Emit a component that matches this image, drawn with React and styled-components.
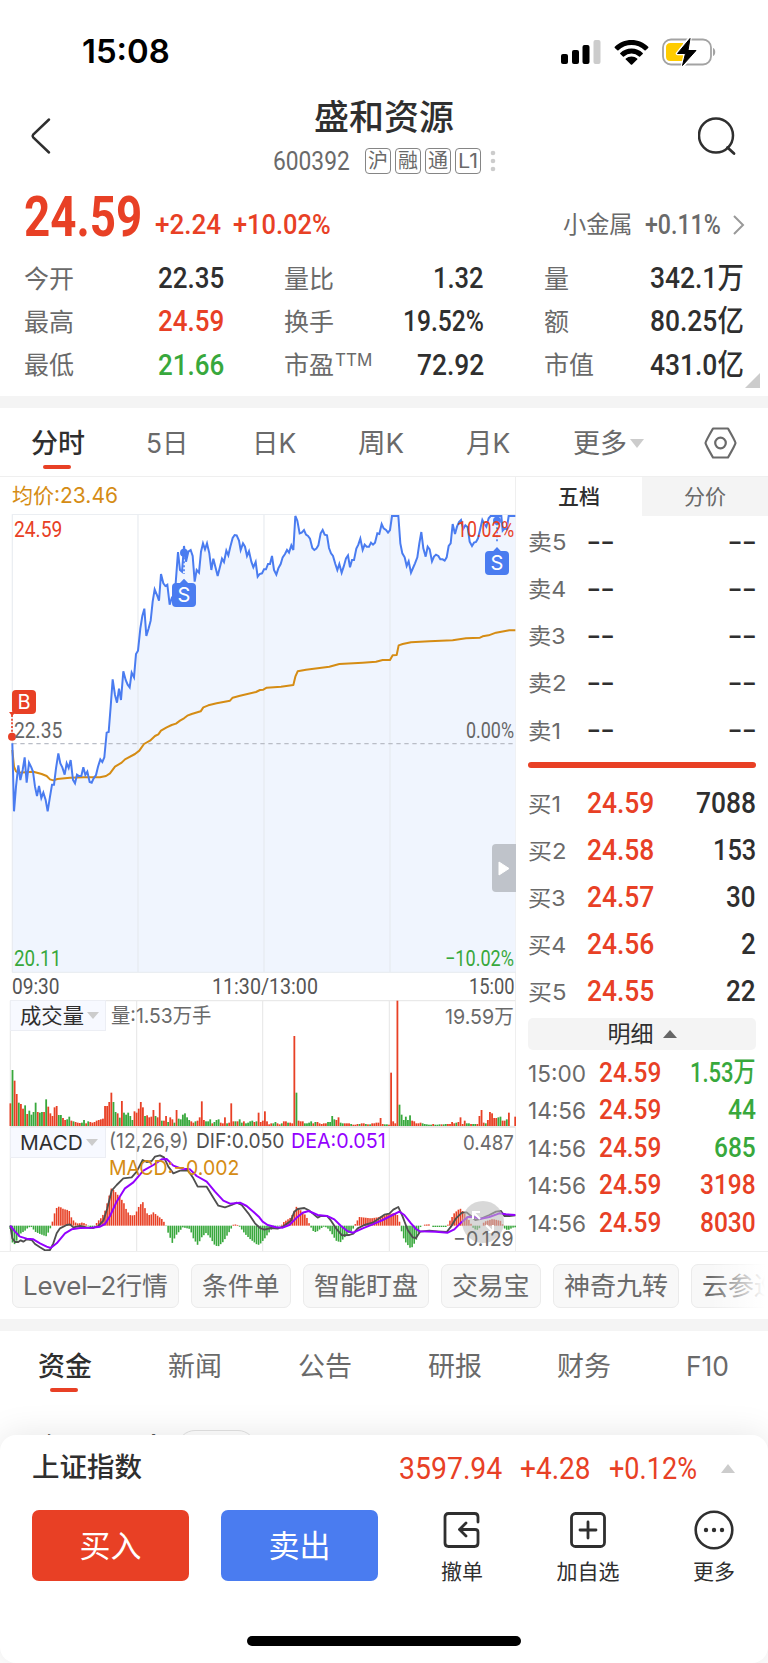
import React, { useLayoutEffect, useRef } from 'react';
import styled, { createGlobalStyle } from 'styled-components';

const RED = '#e84025';
const GREEN = '#38a83c';
const BLUE = '#4a7cf0';
const GOLD = '#d58c14';
const INK = '#2f2f2f';
const GREY = '#6a6a6a';

const DIN = `Roboto, "Noto Sans CJK SC", sans-serif`;
const SANS = `Inter, "Noto Sans CJK SC", sans-serif`;

const Global = createGlobalStyle`
  * { box-sizing: border-box; }
  body { margin: 0; background: #fff; color: ${INK}; font-family: ${SANS}; overflow: hidden; }
  svg { display: block; flex: none; }
`;

/* ---------- condensed text ---------- */

const FitBox = styled.span`
  display: block;
  flex: none;
  height: ${(p) => Math.round(p.$size * 1.2)}px;
  line-height: ${(p) => Math.round(p.$size * 1.2)}px;
  font-family: ${(p) => (p.$din ? DIN : SANS)};
  font-size: ${(p) => p.$size}px;
  font-weight: ${(p) => p.$weight || 400};
  color: ${(p) => p.$color || 'inherit'};
  white-space: nowrap;
`;
const FitInner = styled.span`
  display: inline-block;
  transform-origin: 0 50%;
`;

function Fit({ w, size, weight, color, din, children }) {
  const box = useRef(null);
  const ref = useRef(null);
  useLayoutEffect(() => {
    ref.current.style.transform = `scaleX(${w / ref.current.offsetWidth})`;
    box.current.style.width = `${w}px`;
  }, [w, children]);
  return (
    <FitBox ref={box} $size={size} $weight={weight} $color={color} $din={din}>
      <FitInner ref={ref}>{children}</FitInner>
    </FitBox>
  );
}

/* ---------- page parts ---------- */

const Page = styled.main`
  width: 768px;
  height: 1663px;
  display: flex;
  flex-direction: column;
  overflow: hidden;
  background: #fff;
`;
const StatusBar = styled.div`
  height: 101px;
  flex: none;
  padding: 2px 51px 0 82px;
  display: flex;
  align-items: center;
  justify-content: space-between;
`;
const StatusIcons = styled.div`
  display: flex;
  align-items: center;
  gap: 13px;
`;
const Header = styled.header`
  height: 73px;
  flex: none;
  padding: 0 32px 0 30px;
  display: grid;
  grid-template-columns: 61px 1fr 38px;
  align-items: center;
`;
const TitleBlock = styled.div`
  display: flex;
  flex-direction: column;
  gap: 15px;
  height: 73px;
  padding-left: 182px;
`;
const Title = styled.h1`
  margin: 0 0 0 41px;
  font-size: 35px;
  font-weight: 500;
  line-height: 33px;
  height: 32px;
  white-space: nowrap;
`;
const CodeRow = styled.div`
  display: flex;
  align-items: center;
  height: 26px;
  gap: 4px;
`;
const CodeNum = styled.div`
  margin-right: 11px;
  color: ${GREY};
`;
const Badge = styled.span`
  width: 26px;
  height: 26px;
  flex: none;
  display: flex;
  justify-content: center;
  align-items: center;
  border: 1.5px solid #858585;
  border-radius: 4px;
  font-size: 20px;
  line-height: 24px;
  color: ${GREY};
`;
const Quote = styled.section`
  height: 83px;
  flex: none;
  display: flex;
  align-items: center;
  padding: 2px 23px 0 24px;
`;
const QuoteChange = styled.div`
  display: flex;
  gap: 12px;
  padding: 17px 0 0 13px;
  flex: 1;
`;
const Sector = styled.div`
  display: flex;
  align-items: center;
  gap: 12px;
  padding-top: 17px;
  color: ${GREY};
`;
const Stats = styled.section`
  position: relative;
  height: 139px;
  flex: none;
  display: grid;
  grid-template-columns: 200px 200px 200px;
  column-gap: 60px;
  grid-auto-rows: 43.3px;
  padding: 0 0 0 24px;
`;
const Stat = styled.div`
  display: flex;
  align-items: center;
  justify-content: space-between;
`;
const StatLabel = styled.span`
  display: flex;
  font-size: 25px;
  line-height: 30px;
  color: ${GREY};
`;
const Sup = styled.span`
  line-height: 20px;
  margin-left: 1px;
`;
const Corner = styled.i`
  position: absolute;
  right: 8px;
  bottom: 8px;
  border-style: solid;
  border-width: 0 0 15px 15px;
  border-color: transparent transparent #ccc transparent;
`;
const Band = styled.div`
  height: 12px;
  flex: none;
  background: #f4f4f4;
`;
const PeriodTabs = styled.nav`
  height: 69px;
  flex: none;
  display: flex;
  align-items: center;
  border-bottom: 1px solid #efefef;
  padding: 3px 0 0 31px;
`;
const Tab = styled.div`
  position: relative;
  width: ${(p) => p.$w}px;
  flex: none;
  display: flex;
  align-items: center;
  gap: 3px;
  font-size: 27px;
  line-height: 34px;
  font-weight: ${(p) => (p.$on ? 500 : 400)};
  color: ${(p) => (p.$on ? INK : GREY)};
  white-space: nowrap;
  &::after {
    content: '';
    display: ${(p) => (p.$on ? 'block' : 'none')};
    position: absolute;
    left: 12px;
    bottom: -8px;
    width: 28px;
    height: 4px;
    border-radius: 2px;
    background: ${RED};
  }
`;
const Market = styled.section`
  height: 775px;
  flex: none;
  display: grid;
  grid-template-columns: 515px 253px;
  border-bottom: 1px solid #eee;
`;
const Charts = styled.div`
  width: 516px;
  display: flex;
  flex-direction: column;
`;
const Average = styled.div`
  height: 37px;
  padding: 6px 0 0 12px;
  color: ${GOLD};
`;
const Plot = styled.div`
  position: relative;
  height: ${(p) => p.$h}px;
`;
const Label = styled.div`
  position: absolute;
  top: ${(p) => p.$y}px;
  transform: translateY(-50%);
  ${(p) => (p.$right != null ? `right: ${p.$right}px;` : `left: ${p.$left}px;`)}
  display: flex;
  gap: 7px;
`;
const Marker = styled.span`
  position: absolute;
  left: ${(p) => p.$x}px;
  top: ${(p) => p.$y}px;
  width: 24px;
  height: 24px;
  border-radius: 4px;
  background: ${(p) => p.$bg};
  color: #fff;
  font-size: 20px;
  line-height: 24px;
  text-align: center;
`;
const Times = styled.div`
  height: 27px;
  display: flex;
  align-items: center;
  justify-content: space-between;
  padding: 1px 1px 0 12px;
  color: #555;
`;
const Selector = styled.div`
  position: absolute;
  left: 10px;
  top: 0;
  width: 96px;
  height: 31px;
  padding-left: 9px;
  display: flex;
  align-items: center;
  gap: 3px;
  background: #f7f9ff;
  border: 1px solid #eceef4;
  color: ${INK};
`;
const Expander = styled.div`
  position: absolute;
  right: 0;
  top: 330px;
  width: 24px;
  height: 48px;
  border-radius: 4px 0 0 4px;
  background: #bfc3ca;
  display: flex;
  align-items: center;
  justify-content: center;
`;
const Book = styled.aside`
  border-left: 1px solid #efefef;
`;
const BookTabs = styled.div`
  display: grid;
  grid-template-columns: 126px 126px;
  height: 39px;
`;
const BookTab = styled.div`
  text-align: center;
  font-size: 21px;
  line-height: 40px;
  height: 39px;
  font-weight: ${(p) => (p.$on ? 500 : 400)};
  color: ${(p) => (p.$on ? INK : GREY)};
  background: ${(p) => (p.$on ? '#fff' : '#f4f4f4')};
`;
const Levels = styled.div`
  padding: ${(p) => p.$top}px 12px ${(p) => p.$bottom || 0}px;
`;
const Level = styled.div`
  height: 47.15px;
  display: grid;
  grid-template-columns: 59px 1fr auto;
  align-items: center;
`;
const LevelName = styled.div`
  padding-top: 1px;
  color: ${GREY};
`;
const Divider = styled.div`
  height: 6px;
  margin: 7px 12px 0 12px;
  border-radius: 3px;
  background: ${RED};
`;
const DetailBar = styled.div`
  margin: 3px 12px 4px 12px;
  height: 32px;
  border-radius: 5px;
  background: #f4f4f4;
  display: flex;
  align-items: center;
  justify-content: center;
  gap: 9px;
  font-size: 23px;
  line-height: 30px;
`;
const Trade = styled.div`
  height: 37.4px;
  padding: 0 12px;
  display: grid;
  grid-template-columns: 71px 1fr auto;
  align-items: center;
`;
const TradeTime = styled.div`
  padding-top: 2px;
`;
const Chips = styled.div`
  position: relative;
  height: 67px;
  flex: none;
  display: flex;
  gap: 12px;
  padding: 12px 0 0 12px;
  overflow: hidden;
  &::after {
    content: '';
    position: absolute;
    right: 0;
    top: 0;
    width: 58px;
    height: 64px;
    background: linear-gradient(90deg, rgba(255, 255, 255, 0), #fff 95%);
  }
`;
const Chip = styled.div`
  height: 44px;
  flex: none;
  padding: 0 10px 2px;
  display: flex;
  align-items: center;
  border: 1px solid #ebebeb;
  border-radius: 7px;
  background: #f8f8f8;
  color: ${GREY};
`;
const InfoTabs = styled.nav`
  height: 70px;
  flex: none;
  display: flex;
  align-items: center;
  padding: 2px 0 0 38px;
`;
const Peek = styled.div`
  height: 34px;
  flex: none;
  padding: 29px 0 0 32px;
  display: flex;
  gap: 13px;
  overflow: hidden;
  background: #fff;
`;
const PeekTitle = styled.h2`
  margin: 0;
  font-size: 33px;
  line-height: 41px;
  font-weight: 500;
  white-space: nowrap;
`;
const PeekPill = styled.span`
  width: 79px;
  height: 36px;
  flex: none;
  border: 1.5px solid #e3e3e3;
  border-radius: 18px;
`;
const Sheet = styled.footer`
  position: relative;
  height: 228px;
  flex: none;
  border-radius: 16px;
  background: #fff;
  box-shadow: 0 0 34px rgba(0, 0, 0, 0.1);
`;
const IndexRow = styled.div`
  height: 66px;
  display: flex;
  align-items: center;
  padding: 0 33px 0 32px;
  gap: 18px;
`;
const IndexName = styled.div`
  flex: 1;
`;
const TriangleSlot = styled.span`
  margin-left: 6px;
`;
const Actions = styled.div`
  margin-top: 9px;
  display: flex;
  padding-left: 32px;
`;
const TradeButton = styled.button`
  width: 157px;
  height: 71px;
  flex: none;
  margin-right: 32px;
  border: 0;
  border-radius: 7px;
  background: ${(p) => p.$bg};
  color: #fff;
  font: 400 31px/71px ${SANS};
  padding: 0;
`;
const ActionList = styled.div`
  display: flex;
  flex: none;
  margin-left: -11px;
`;
const Action = styled.div`
  width: 126px;
  display: flex;
  flex-direction: column;
  align-items: center;
  gap: 9px;
  font-size: 21px;
  line-height: 26px;
`;
const HomeBar = styled.div`
  position: absolute;
  left: 247px;
  bottom: 17px;
  width: 274px;
  height: 10px;
  border-radius: 5px;
  background: #000;
`;
const Caret = styled.i`
  flex: none;
  display: block;
  border-style: solid;
  border-color: ${(p) => p.$color || '#ccc'} transparent;
  border-width: ${(p) => (p.$up ? `0 ${p.$w / 2}px ${p.$h}px` : `${p.$h}px ${p.$w / 2}px 0`)};
`;

/* ---------- chart data, in thirds of a pixel ---------- */

const PRICE =
  '37,820 42,1024 48,950 55,886 61,930 68,900 74,862 80,938 87,878 94,892 99,905 105,950 111,978 117,948 124,984 130,968 137,990 143,1024 150,980 156,944 162,944 168,895 175,850 181,880 187,892 194,914 200,880 206,894 212,870 219,930 225,940 231,914 237,918 244,918 250,892 256,915 262,905 269,936 275,938 281,925 288,915 294,890 301,868 307,876 313,862 320,788 326,786 332,710 338,628 345,675 351,698 357,656 363,690 370,604 377,630 383,644 389,652 395,608 402,622 408,552 414,542 421,475 427,438 433,416 439,498 446,475 452,452 458,395 464,358 471,375 477,392 483,312 490,340 496,348 502,344 509,404 515,385 521,395 527,340 534,246 540,300 546,305 552,228 558,275 565,245 572,240 578,258 584,335 590,300 597,308 603,245 609,220 615,238 621,220 628,250 634,300 640,266 647,294 653,318 660,290 666,266 672,276 679,242 685,256 691,230 698,204 704,195 710,196 717,212 722,240 729,220 735,230 741,258 747,244 754,275 760,292 767,276 773,320 779,312 786,310 792,298 798,298 804,282 810,282 816,258 822,300 829,314 835,295 842,282 848,262 855,252 861,240 867,248 874,226 880,240 886,138 892,152 899,190 905,188 912,180 918,194 924,198 930,206 937,234 943,240 949,236 955,226 962,190 968,180 974,194 981,196 987,234 993,250 999,258 1006,282 1012,300 1018,282 1025,308 1031,290 1038,265 1044,256 1050,292 1056,270 1062,270 1069,236 1075,224 1081,206 1088,240 1094,224 1100,230 1107,230 1113,218 1119,224 1125,218 1132,190 1138,192 1145,162 1151,175 1158,180 1164,188 1170,180 1176,138 1195,138 1201,220 1207,250 1214,262 1220,288 1226,274 1233,308 1239,294 1245,280 1252,262 1258,220 1264,186 1270,235 1277,260 1283,230 1289,238 1296,274 1302,260 1308,254 1315,258 1321,268 1328,268 1334,272 1340,262 1346,228 1352,220 1358,162 1365,192 1371,170 1377,156 1383,150 1390,176 1396,166 1403,172 1409,215 1416,228 1422,218 1428,216 1434,205 1440,180 1447,150 1453,162 1459,170 1466,145 1472,138 1504,138 1508,182 1514,175 1520,178 1526,138 1546,138';

const AVERAGE =
  '37,840 42,890 48,904 55,908 100,905 125,912 140,918 150,928 160,931 172,927 210,923 250,922 300,922 318,918 330,910 345,890 365,878 375,868 405,852 418,842 432,822 450,812 465,798 475,793 483,782 500,772 515,765 528,761 540,752 552,745 562,737 575,732 602,724 610,712 625,706 650,700 690,692 698,683 720,677 768,666 780,660 790,659 800,653 843,650 880,645 886,620 893,604 918,599 988,590 1018,582 1088,578 1128,575 1148,570 1170,570 1178,556 1190,555 1196,526 1208,522 1233,517 1288,514 1358,511 1398,505 1440,503 1448,499 1466,496 1488,488 1528,481 1546,481';

const VOLUME =
  '68r 168g 136r 96r 70g 66r 52r 62g 36r 46g 34g 42g 70g 42r 40g 42g 42r 80g 58r 38r 30r 56r 60r 33g 33g 24r 18r 20g 28g 16r 14g 12r 10r 9r 10g 18g 8r 14g 12r 10r 12r 16r 18r 20r 22r 60r 60r 72r 100r 72g 42g 38r 25g 75r 40g 34g 40g 30g 18g 44r 40r 52r 72r 56r 30g 32r 26r 28r 48r 30g 26r 70r 16g 16r 30r 12g 26r 20r 10g 48r 22g 20g 34g 38g 26g 18g 14r 10r 14g 16r 26r 74r 18r 14g 14g 20g 8r 12g 18g 20g 10r 8r 26r 8g 10r 68r 14r 14g 14r 20g 10g 14r 8g 10g 14g 16g 12r 14g 40r 12r 16r 44r 14r 5r 8r 8g 12g 8r 5r 8g 14r 14r 10g 10r 8r 270r 100g 16r 14r 14r 8g 8g 10g 14g 8r 12g 12r 8r 6r 8r 8r 12g 12g 30g 20g 18r 26r 10g 8g 8r 8r 8r 6g 4r 4r 6r 6g 8r 8r 6g 5r 5g 8r 8r 10r 10r 24r 6r 5g 5g 4r 160r 14r 8r 376r 64g 34g 18g 28g 18g 32g 16r 14r 8r 8r 10r 8g 6g 5g 4g 4g 6r 4g 4g 5g 5r 5g 6g 6r 6r 12r 8r 10g 12r 26r 6r 16r 8g 8g 6r 6g 6g 6r 30r 48r 10r 8g 18r 42r 38r 24r 24r 26g 28g 16r 16r 20g 40r 0r 0r 28r';

const HISTOGRAM =
  '31,-10 37,-50 42,-58 50,-45 60,-25 75,-15 85,-5 95,-4 105,-18 120,-25 138,-32 148,-15 155,2 160,25 168,52 178,58 190,50 207,46 215,22 225,10 235,6 248,10 262,2 270,-10 282,-6 292,12 305,25 315,45 325,80 333,112 343,105 355,90 370,72 380,45 392,30 405,32 415,55 428,72 440,38 450,30 460,40 475,28 488,18 497,2 503,-18 517,-52 527,-30 540,-15 548,-5 570,-10 580,-38 593,-58 605,-35 618,-22 630,-35 645,-60 655,-62 670,-48 690,-15 700,3 710,4 718,-2 735,-25 750,-40 770,-56 778,-58 793,-40 813,-12 828,-4 843,0 850,10 873,25 883,45 890,58 903,45 918,30 928,5 938,-15 948,-20 963,-8 973,-2 983,-8 993,-20 1008,-45 1021,-50 1038,-30 1058,-12 1066,5 1078,26 1113,22 1133,25 1158,32 1183,38 1195,30 1202,-8 1213,-45 1233,-70 1248,-45 1260,-5 1273,3 1288,4 1298,-4 1340,-4 1348,12 1363,38 1380,52 1393,38 1408,15 1420,-8 1430,-14 1440,-6 1453,12 1478,20 1503,14 1513,-8 1523,-14 1538,-6 1552,-4';

const DIF =
  '31,797 37,835 45,846 55,846 62,841 70,845 80,838 95,840 105,852 120,862 135,871 150,870 160,850 170,820 180,805 200,795 210,793 220,802 240,798 260,802 280,804 295,798 310,782 322,745 335,692 350,675 370,655 395,652 410,635 428,600 440,606 455,603 465,590 480,586 492,592 505,620 520,640 540,632 565,632 580,655 593,680 620,680 635,705 655,737 675,742 695,735 710,728 725,735 745,760 765,790 780,804 793,809 813,804 833,806 848,800 873,782 883,755 893,747 913,744 928,752 953,773 963,768 981,768 993,782 1008,805 1026,826 1048,825 1060,821 1073,805 1093,795 1118,788 1138,775 1153,764 1168,761 1180,749 1195,741 1208,770 1223,810 1238,832 1248,834 1260,815 1288,812 1313,814 1340,816 1353,800 1368,775 1386,758 1400,757 1413,768 1426,780 1440,777 1468,765 1488,755 1503,753 1513,768 1528,768 1546,766';

const DEA =
  '31,797 45,815 60,830 80,836 100,838 120,850 140,860 152,864 170,850 195,820 215,808 240,804 275,803 300,800 315,792 330,768 350,725 375,685 400,667 430,632 460,615 485,598 500,597 520,617 545,626 570,628 590,648 620,665 645,695 670,722 690,731 720,728 740,738 760,755 778,772 788,785 803,795 828,802 848,803 868,795 888,775 908,758 926,753 953,765 981,768 1003,778 1023,798 1043,814 1060,818 1088,805 1118,793 1148,780 1178,765 1198,755 1213,765 1233,790 1248,807 1260,814 1308,815 1343,818 1363,808 1383,788 1403,771 1418,770 1443,776 1468,771 1498,760 1518,763 1546,765';

const STEP = 6.31;
const volumeBars = VOLUME.split(' ').map((s, i) => ({
  x: 31 + i * STEP - 2.5,
  h: parseInt(s, 10),
  up: s.endsWith('r'),
}));
const knots = HISTOGRAM.split(' ').map((s) => s.split(',').map(Number));
const macdBars = Array.from({ length: 241 }, (_, i) => {
  const c = 31 + i * STEP;
  const k = Math.max(1, knots.findIndex((p) => p[0] > c));
  const [x0, y0] = knots[k - 1];
  const [x1, y1] = knots[k];
  return { x: c - 2.3, v: y0 + ((y1 - y0) * (c - x0)) / (x1 - x0) };
});

const stats = [
  ['今开', '22.35', 66], ['量比', '1.32', 51], ['量', '342.1万', 94],
  ['最高', '24.59', 66, RED], ['换手', '19.52%', 81], ['额', '80.25亿', 94],
  ['最低', '21.66', 66, GREEN], ['市盈', '72.92', 67, null, 'TTM'], ['市值', '431.0亿', 94],
];
const buys = [
  ['买1', '24.59', '7088', 60, 33], ['买2', '24.58', '153', 43, 38], ['买3', '24.57', '30', 30, 38],
  ['买4', '24.56', '2', 15, 38], ['买5', '24.55', '22', 30, 38],
];
const trades = [
  ['15:00', '1.53万', 66, GREEN], ['14:56', '44', 28, GREEN], ['14:56', '685', 42, GREEN],
  ['14:56', '3198', 56, RED], ['14:56', '8030', 56, RED],
];
const chips = [
  ['Level–2行情', 145], ['条件单', 78], ['智能盯盘', 104], ['交易宝', 78], ['神奇九转', 104], ['云参巡航', 104],
];

function PricePlot() {
  return (
    <Plot $h={459}>
      <svg width="516" height="459" viewBox="0 132 1548 1377">
        <polygon points={`37,1507 ${PRICE} 1546,1507`} fill="#f0f5fe" />
        <path d="M36 133H1547M36 1507H1547M37 133V1507M414 133V1507M792 133V1507M1170 133V1507" stroke="#e4e8ee" strokeOpacity=".75" strokeWidth="4" fill="none" />
        <path d="M37 821H1546" stroke="#b9bdc6" strokeWidth="4" strokeDasharray="13 11" />
        <polyline points={AVERAGE} fill="none" stroke={GOLD} strokeWidth="6" strokeLinejoin="round" />
        <polyline points={PRICE} fill="none" stroke={BLUE} strokeWidth="6" strokeLinejoin="miter" />
        <path d="M36 735V800" stroke={RED} strokeWidth="5" strokeDasharray="6 5" />
        <path d="M27 726H48L36 738Z" fill={RED} />
        <circle cx="36" cy="800" r="12" fill={RED} />
        <path d="M552 250V312M1491 160V216" stroke={BLUE} strokeWidth="5" strokeDasharray="6 6" />
        <circle cx="552" cy="248" r="12" fill={BLUE} />
        <circle cx="1491" cy="152" r="12" fill={BLUE} />
        <path d="M537 342L552 326L567 342ZM1476 247L1491 231L1506 247Z" fill={BLUE} />
      </svg>
      <Marker $x={12} $y={176} $bg={RED}>B</Marker>
      <Marker $x={172} $y={69} $bg={BLUE}>S</Marker>
      <Marker $x={485} $y={37} $bg={BLUE}>S</Marker>
      <Label $left={14} $y={16}><Fit din w={48} size={22} color={RED}>24.59</Fit></Label>
      <Label $right={2} $y={16}><Fit din w={57} size={22} color={RED}>10.02%</Fit></Label>
      <Label $left={14} $y={216.5}><Fit din w={48} size={22} color="#666">22.35</Fit></Label>
      <Label $right={2} $y={216.5}><Fit din w={48} size={22} color="#666">0.00%</Fit></Label>
      <Label $left={14} $y={445}><Fit din w={47} size={22} color={GREEN}>20.11</Fit></Label>
      <Label $right={2} $y={445}><Fit din w={69} size={22} color={GREEN}>−10.02%</Fit></Label>
      <Expander>
        <svg width="12" height="15" viewBox="0 0 12 15"><path d="M1 1L11 7.5L1 14Z" fill="#fff" stroke="#fff" strokeLinejoin="round" /></svg>
      </Expander>
    </Plot>
  );
}

function VolumePlot() {
  return (
    <Plot $h={127}>
      <svg width="516" height="127" viewBox="0 120 1548 381">
        <path d="M31 122H1546M31 122V500M410 122V500M788 122V500M1168 122V500M31 499H1546" stroke="#e9e9e9" strokeWidth="3.5" fill="none" />
        {volumeBars.map((b) => (
          <rect key={b.x} x={b.x} y={498 - b.h} width="5.4" height={b.h} fill={b.up ? RED : GREEN} />
        ))}
      </svg>
      <Selector><Fit w={64} size={21}>成交量</Fit><Caret $w={12} $h={7} /></Selector>
      <Label $left={111} $y={14.5}><Fit w={100} size={20.5} color={GREY}>量:1.53万手</Fit></Label>
      <Label $right={2} $y={15.5}><Fit w={69} size={20.5} color={GREY}>19.59万</Fit></Label>
    </Plot>
  );
}

function MacdPlot() {
  return (
    <Plot $h={124}>
      <svg width="516" height="124" viewBox="0 501 1548 372">
        <path d="M31 502H1546M31 502V873M410 502V873M788 502V873M1168 502V873" stroke="#e9e9e9" strokeWidth="3.5" fill="none" />
        {macdBars.map((b) => (
          <rect key={b.x} x={b.x} y={b.v > 0 ? 797 - b.v : 797} width="4.8" height={Math.abs(b.v)} fill={b.v > 0 ? RED : GREEN} />
        ))}
        <polyline points={DIF} fill="none" stroke="#4f4f4f" strokeWidth="5.5" strokeLinejoin="round" />
        <polyline points={DEA} fill="none" stroke="#9400ff" strokeWidth="6" strokeLinejoin="round" />
      </svg>
      <Selector><Fit w={63} size={20.5}>MACD</Fit><Caret $w={12} $h={7} /></Selector>
      <Label $left={109} $y={13}>
        <Fit w={80} size={20.5} color={GREY}>(12,26,9)</Fit>
        <Fit w={88} size={20.5} color="#4f4f4f">DIF:0.050</Fit>
        <Fit w={95} size={20.5} color="#9400ff">DEA:0.051</Fit>
      </Label>
      <Label $left={109} $y={40}><Fit w={130} size={20.5} color={GOLD}>MACD:−0.002</Fit></Label>
      <Label $right={2} $y={14.5}><Fit w={51} size={20.5} color={GREY}>0.487</Fit></Label>
      <Label $right={12} $y={95}>
        <svg width="42" height="42" viewBox="0 0 42 42">
          <circle cx="21" cy="21" r="21" fill="#bbb" fillOpacity=".58" />
          <path d="M18 18L11 11M11 18V11H18M24 24L31 31M31 24V31H24" stroke="#fff" strokeWidth="2" fill="none" />
        </svg>
      </Label>
      <Label $right={2} $y={110.5}><Fit w={61} size={20.5} color={GREY}>−0.129</Fit></Label>
    </Plot>
  );
}

export default function App() {
  return (
    <Page>
      <Global />
      <StatusBar>
        <Fit w={88} size={32.5} weight={600} color="#000">15:08</Fit>
        <StatusIcons>
          <svg width="40" height="26" viewBox="0 0 40 26">
            <rect x="0" y="15" width="7" height="10" rx="2" />
            <rect x="11" y="11" width="7" height="14" rx="2" />
            <rect x="21.500" y="6" width="7" height="19" rx="2" />
            <rect x="32.500" y="1" width="7" height="24" rx="2" fill="#ccc" />
          </svg>
          <svg width="35" height="26" viewBox="0 0 35 26">
            <path d="M17.500 1C11 1 5 3.500 .8 7.700Q.3 8.300 .8 8.900L3.300 11.300Q3.900 11.800 4.500 11.300A18.500 18.500 0 0 1 30.500 11.300Q31.100 11.800 31.700 11.300L34.200 8.900Q34.700 8.300 34.200 7.700C30 3.500 24 1 17.500 1Z" />
            <path d="M17.500 9.500C13 9.500 9.200 11.300 6.300 13.900Q5.700 14.500 6.300 15.100L8.900 17.500Q9.400 18 10 17.500A11 11 0 0 1 25 17.500Q25.600 18 26.100 17.500L28.700 15.100Q29.300 14.500 28.700 13.900C25.800 11.300 22 9.500 17.500 9.500Z" />
            <path d="M17.500 17.400C15.200 17.400 13.400 18.200 11.900 19.400Q11.200 20 11.800 20.600L16.800 25.400Q17.500 26 18.200 25.400L23.200 20.600Q23.800 20 23.100 19.400C21.600 18.200 19.800 17.400 17.500 17.400Z" />
          </svg>
          <svg width="55" height="28" viewBox="0 0 55 28">
            <rect x="1" y="1.500" width="48" height="25" rx="8" fill="none" stroke="#a3a3a3" strokeWidth="1.800" />
            <path d="M51 10C54 11 54 17 51 18Z" fill="#a3a3a3" />
            <path d="M8.500 5H21V23H8.500Q4 23 4 18.500V9.500Q4 5 8.500 5Z" fill="#ffcc00" />
            <path d="M28 0L15.500 15.500H23.500L20.500 28L34 12.500H26Z" stroke="#fff" strokeWidth="3.500" strokeLinejoin="round" />
            <path d="M28 0.500L15.500 15.500H23.500L20.500 27.500L34 12.500H26Z" strokeWidth="1" stroke="#000" strokeLinejoin="round" />
          </svg>
        </StatusIcons>
      </StatusBar>

      <Header>
        <svg width="22" height="42" viewBox="0 2 22 42"><path d="M19 2.500L3.200 17.500Q2 19 3.200 20.500L19 35.500" transform="translate(0 2)" fill="none" stroke={INK} strokeWidth="2.500" strokeLinecap="round" /></svg>
        <TitleBlock>
          <Title>盛和资源</Title>
          <CodeRow>
            <CodeNum><Fit din w={77} size={26} weight={450}>600392</Fit></CodeNum>
            <Badge>沪</Badge>
            <Badge>融</Badge>
            <Badge>通</Badge>
            <Badge><Fit w={20} size={19.5}>L1</Fit></Badge>
            <svg width="28" height="24" viewBox="2 0 28 24"><g fill="#ccc"><circle cx="10" cy="4" r="2.300" /><circle cx="10" cy="12" r="2.300" /><circle cx="10" cy="20" r="2.300" /></g></svg>
          </CodeRow>
        </TitleBlock>
        <svg width="40" height="42" viewBox="0 0 40 42"><circle cx="18" cy="18.500" r="17" fill="none" stroke={INK} strokeWidth="2.500" /><path d="M29.500 30.500L36 36.500" stroke={INK} strokeWidth="2.800" strokeLinecap="round" /></svg>
      </Header>

      <Quote>
        <Fit din w={118} size={55} weight={700} color={RED}>24.59</Fit>
        <QuoteChange>
          <Fit din w={66} size={28} weight={500} color={RED}>+2.24</Fit>
          <Fit din w={98} size={28} weight={500} color={RED}>+10.02%</Fit>
        </QuoteChange>
        <Sector>
          <Fit w={70} size={23.5}>小金属</Fit>
          <Fit din w={76} size={28} weight={500}>+0.11%</Fit>
          <svg width="12" height="20" viewBox="0 0 12 20"><path d="M1 1L10 10L1 19" fill="none" stroke="#999" strokeWidth="2" /></svg>
        </Sector>
      </Quote>

      <Stats>
        {stats.map(([name, value, w, color, sup]) => (
          <Stat key={name}>
            <StatLabel>{name}{sup && <Sup><Fit w={37} size={17}>{sup}</Fit></Sup>}</StatLabel>
            <Fit din w={w} size={29.5} weight={500} color={color}>{value}</Fit>
          </Stat>
        ))}
        <Corner />
      </Stats>
      <Band />

      <PeriodTabs>
        <Tab $on $w={115}>分时</Tab>
        <Tab $w={106}><Fit w={42} size={27}>5日</Fit></Tab>
        <Tab $w={106}><Fit w={44} size={27}>日K</Fit></Tab>
        <Tab $w={108}><Fit w={46} size={27}>周K</Fit></Tab>
        <Tab $w={107}><Fit w={44} size={27}>月K</Fit></Tab>
        <Tab $w={131}>更多<Caret $w={15} $h={9} /></Tab>
        <svg width="33" height="34" viewBox="0 1 33 34"><g fill="none" stroke={GREY} strokeWidth="2.200" strokeLinejoin="round"><path d="M9 1.500H24Q31.500 14.500 31.500 16Q31.500 17.500 24 30.500H9Q1.500 17.500 1.500 16Q1.500 14.500 9 1.500Z" transform="translate(0 1)" /><circle cx="16.500" cy="17" r="5.300" /></g></svg>
      </PeriodTabs>

      <Market>
        <Charts>
          <Average><Fit w={106} size={21}>均价:23.46</Fit></Average>
          <PricePlot />
          <Times>
            <Fit din w={48} size={21.5}>09:30</Fit>
            <Fit din w={106} size={21.5}>11:30/13:00</Fit>
            <Fit din w={46} size={21.5}>15:00</Fit>
          </Times>
          <VolumePlot />
          <MacdPlot />
        </Charts>
        <Book>
          <BookTabs>
            <BookTab $on>五档</BookTab>
            <BookTab>分价</BookTab>
          </BookTabs>
          <Levels $top={2} $bottom={1}>
            {[5, 4, 3, 2, 1].map((n) => (
              <Level key={n}>
                <LevelName><Fit w={n === 1 ? 33 : 38} size={22}>{`卖${n}`}</Fit></LevelName>
                <Fit din w={27} size={27} weight={500}>--</Fit>
                <Fit din w={28} size={27} weight={500}>--</Fit>
              </Level>
            ))}
          </Levels>
          <Divider />
          <Levels $top={12}>
            {buys.map(([name, price, qty, w, nw]) => (
              <Level key={name}>
                <LevelName><Fit w={nw} size={22}>{name}</Fit></LevelName>
                <Fit din w={67} size={29.5} weight={500} color={RED}>{price}</Fit>
                <Fit din w={w} size={29.5} weight={500}>{qty}</Fit>
              </Level>
            ))}
          </Levels>
          <DetailBar>明细<Caret $up $w={15} $h={8} $color="#666" /></DetailBar>
          {trades.map(([time, qty, w, color], i) => (
            <Trade key={i}>
              <TradeTime><Fit w={58} size={23} color={GREY}>{time}</Fit></TradeTime>
              <Fit din w={62} size={28} weight={500} color={RED}>24.59</Fit>
              <Fit din w={w} size={28} weight={500} color={color}>{qty}</Fit>
            </Trade>
          ))}
        </Book>
      </Market>

      <Chips>
        {chips.map(([name, w]) => (
          <Chip key={name}><Fit w={w} size={25.5}>{name}</Fit></Chip>
        ))}
      </Chips>
      <Band />
      <InfoTabs>
        <Tab $on $w={130}>资金</Tab>
        <Tab $w={130}>新闻</Tab>
        <Tab $w={130}>公告</Tab>
        <Tab $w={129}>研报</Tab>
        <Tab $w={129}>财务</Tab>
        <Tab $w={60}><Fit w={43} size={27}>F10</Fit></Tab>
      </InfoTabs>
      <Peek>
        <PeekTitle>个股异动</PeekTitle>
        <PeekPill />
      </Peek>

      <Sheet>
        <IndexRow>
          <IndexName><Fit w={110} size={27} weight={500}>上证指数</Fit></IndexName>
          <Fit din w={103} size={32} color={RED}>3597.94</Fit>
          <Fit din w={71} size={32} color={RED}>+4.28</Fit>
          <Fit din w={88} size={32} color={RED}>+0.12%</Fit>
          <TriangleSlot><Caret $up $w={15} $h={9} /></TriangleSlot>
        </IndexRow>
        <Actions>
          <TradeButton $bg={RED}>买入</TradeButton>
          <TradeButton $bg={BLUE}>卖出</TradeButton>
          <ActionList>
            <Action>
              <svg width="40" height="40" viewBox="0 0 40 40"><g fill="none" stroke={INK} strokeWidth="2.800" strokeLinecap="round" strokeLinejoin="round"><path d="M36 12V7Q36 3.500 32.500 3.500H6.500Q3 3.500 3 7V33Q3 36.500 6.500 36.500H32.500Q36 36.500 36 33V22Q36 19.500 33 19.500H18" /><path d="M24 13L17.500 19.500L24 26" /></g></svg>
              撤单
            </Action>
            <Action>
              <svg width="40" height="40" viewBox="0 0 40 40"><g fill="none" stroke={INK} strokeWidth="2.800" strokeLinecap="round"><rect x="3.500" y="3.500" width="33" height="33" rx="4" /><path d="M20 12V28M12 20H28" /></g></svg>
              加自选
            </Action>
            <Action>
              <svg width="40" height="40" viewBox="0 0 40 40"><circle cx="20" cy="20" r="18.300" fill="none" stroke={INK} strokeWidth="2.600" /><g fill={INK}><circle cx="12" cy="20" r="2.200" /><circle cx="20" cy="20" r="2.200" /><circle cx="28" cy="20" r="2.200" /></g></svg>
              更多
            </Action>
          </ActionList>
        </Actions>
        <HomeBar />
      </Sheet>
    </Page>
  );
}
